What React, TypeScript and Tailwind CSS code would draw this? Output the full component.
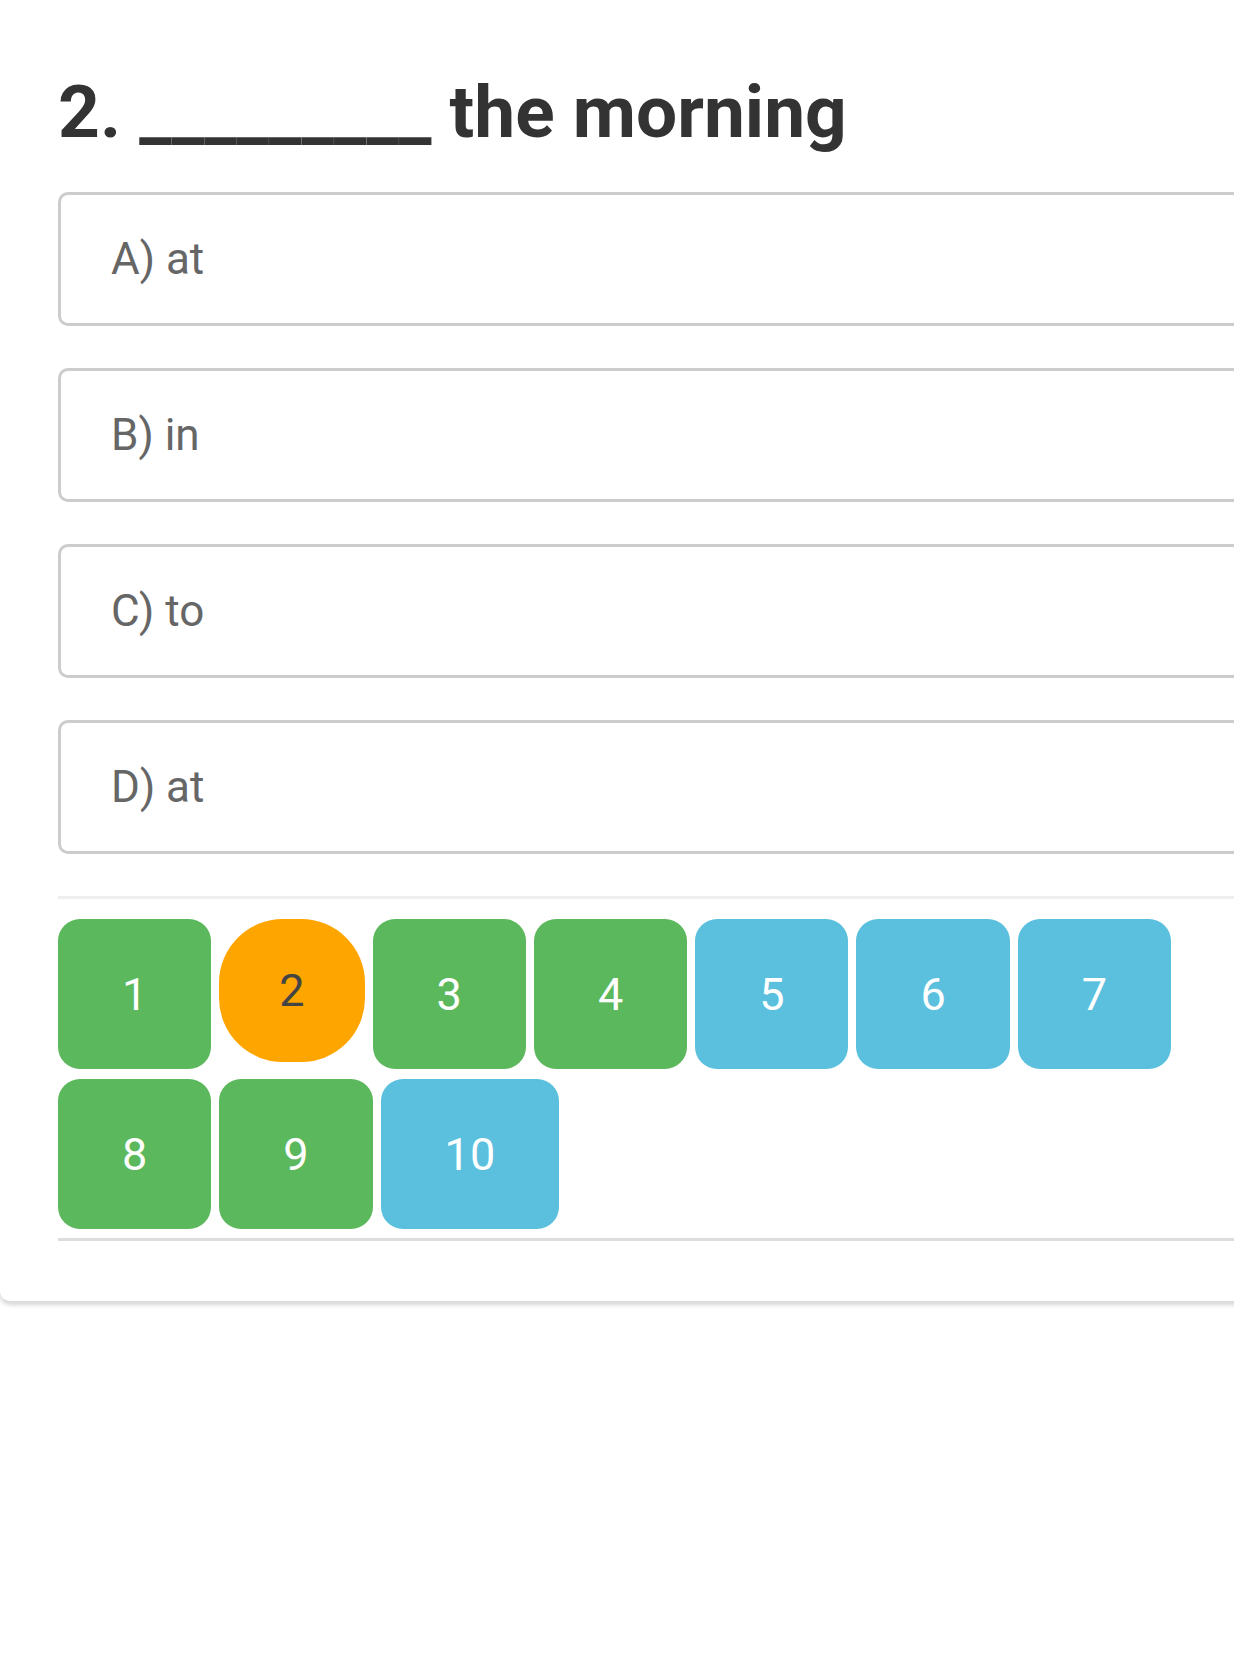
import React from 'react';

const OPTIONS = ['A) at', 'B) in', 'C) to', 'D) at'];

type Status = 'done' | 'current' | 'todo';

const QUESTIONS: { n: number; status: Status }[] = [
  { n: 1, status: 'done' },
  { n: 2, status: 'current' },
  { n: 3, status: 'done' },
  { n: 4, status: 'done' },
  { n: 5, status: 'todo' },
  { n: 6, status: 'todo' },
  { n: 7, status: 'todo' },
  { n: 8, status: 'done' },
  { n: 9, status: 'done' },
  { n: 10, status: 'todo' },
];

const NavButton: React.FC<{ n: number; status: Status }> = ({ n, status }) => {
  if (status === 'current') {
    return (
      <button className="self-start h-[143px] min-w-[145px] px-[60px] rounded-[64px] bg-[#ffa500] text-[#444] flex items-center justify-center text-[45px] leading-none">
        {n}
      </button>
    );
  }
  const bg = status === 'done' ? 'bg-[#5cb85c]' : 'bg-[#5bc0de]';
  return (
    <button className={`h-[150px] min-w-[153px] px-[64px] rounded-[22px] ${bg} text-white flex items-center justify-center text-[45px] leading-none`}>
      {n}
    </button>
  );
};

export default function App() {
  return (
    <div className="w-[1234px] min-h-[1674px] bg-white overflow-hidden font-['Roboto','Liberation_Sans',sans-serif]">
      <div className="w-[1300px] bg-white rounded-b-[10px] shadow-[0_3px_4px_rgba(0,0,0,0.16)] border-b border-[#dcdcdc] pl-[58px] pr-[58px] pt-[68px] pb-[60px]">
        {/* Question */}
        <h2 className="h-[88px] leading-[88px] text-[73px] font-bold text-[#333] whitespace-nowrap">
          2. _________ the morning
        </h2>

        {/* Answers */}
        <div className="mt-[36px] flex flex-col gap-[42px]">
          {OPTIONS.map((opt, i) => (
            <div
              key={i}
              className="h-[134px] border-[3px] border-[#cccccc] rounded-[10px] flex items-center pl-[50px] text-[44px] text-[#666]"
            >
              {opt}
            </div>
          ))}
        </div>

        {/* Question navigator */}
        <div className="mt-[42px] border-t-[3px] border-b-[3px] border-t-[#eeeeee] border-b-[#dddddd] pt-[20px] pb-[9px]">
          <div className="flex flex-wrap gap-x-[8px] gap-y-[10px]">
            {QUESTIONS.map((q) => (
              <NavButton key={q.n} n={q.n} status={q.status} />
            ))}
          </div>
        </div>
      </div>
    </div>
  );
}
